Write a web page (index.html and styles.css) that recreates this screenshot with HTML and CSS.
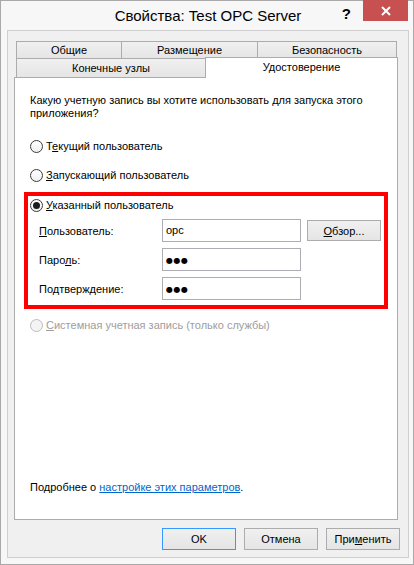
FILE: index.html
```html
<!DOCTYPE html>
<html lang="ru">
<head>
    <meta charset="UTF-8">
    <title>Свойства: Test OPC Server</title>
    <link rel="stylesheet" href="styles.css">
</head>
<body>
    <div class="window">
        <div class="titlebar">
            <div class="title">Свойства: Test OPC Server</div>
            <div class="controls">
                <span class="help">?</span>
                <span class="close">
                    <svg width="10" height="10" viewBox="0 0 10 10"><path d="M1 1 L9 9 M9 1 L1 9" stroke="#fff" stroke-width="2"/></svg>
                </span>
            </div>
        </div>
        <div class="client">
            <div class="tabs">
                <div class="tab-row">
                    <div class="tab t-general">Общие</div>
                    <div class="tab t-place">Размещение</div>
                    <div class="tab t-security">Безопасность</div>
                </div>
                <div class="tab-row front">
                    <div class="tab t-endpoints">Конечные узлы</div>
                    <div class="tab t-identity selected">Удостоверение</div>
                </div>
            </div>
            <div class="panel">
                <p class="question">Какую учетную запись вы хотите использовать для запуска этого<br>приложения?</p>
                <div class="option first"><span class="radio"></span><span>Т<u>е</u>кущий пользователь</span></div>
                <div class="option"><span class="radio"></span><span><u>З</u>апускающий пользователь</span></div>
                <div class="highlight">
                    <div class="option"><span class="radio on"></span><span><u>У</u>казанный пользователь</span></div>
                    <div class="fields">
                        <label><u>П</u>ользователь:</label>
                        <div class="field">opc</div>
                        <button class="btn browse"><u>О</u>бзор...</button>
                        <label>Паро<u>л</u>ь:</label>
                        <div class="field"><span class="dots">●●●</span></div>
                        <span></span>
                        <label>Подтверждение:</label>
                        <div class="field"><span class="dots">●●●</span></div>
                        <span></span>
                    </div>
                </div>
                <div class="option disabled"><span class="radio"></span><span><u>С</u>истемная учетная запись (только службы)</span></div>
                <p class="more">Подробнее о <a href="#">настройке этих параметров</a>.</p>
            </div>
            <div class="actions">
                <button class="btn default">OK</button>
                <button class="btn">Отмена</button>
                <button class="btn">При<u>м</u>енить</button>
            </div>
        </div>
    </div>
</body>
</html>
```

FILE: styles.css
```css
* { box-sizing: border-box; }
body { margin: 0; font-family: "Liberation Sans", Arial, sans-serif; font-size: 11px; color: #000; background: #fff; }
.window { width: 414px; height: 565px; border: 1px solid #a9a9a9; background: #f7f7f7; padding: 0 4px 6px 6px; display: flex; flex-direction: column; }

/* title bar */
.titlebar { height: 29px; display: grid; }
.title, .controls { grid-area: 1 / 1; }
.title { text-align: center; font-size: 15px; line-height: 30px; }
.controls { justify-self: end; display: flex; align-items: flex-start; margin-top: -1px; margin-right: 1px; }
.help { font-weight: bold; font-size: 15px; margin: 5px 12px 0 0; }
.close { width: 45px; height: 21px; background: #c75050; display: flex; align-items: center; justify-content: center; }

/* client area */
.client { flex: 1; border: 1px solid #cfcfcf; background: #f0f0f0; padding: 10px 10px 7px 6px; display: flex; flex-direction: column; }
.tabs { margin-left: 2px; }
.tab-row { display: flex; align-items: flex-end; }
.tab { height: 18px; line-height: 16px; text-align: center; border: 1px solid #acacac; background: linear-gradient(#f0f0f0, #e5e5e5); }
.tab + .tab { margin-left: -1px; }
.t-general { width: 106px; }
.t-place { width: 137px; }
.t-security { width: 140px; }
.front { height: 19px; margin-top: -1px; }
.front .tab { height: 19px; border-bottom: none; line-height: 19px; }
.t-endpoints { width: 190px; }
.front .selected { width: 193px; height: 21px; margin-bottom: -1px; background: #fff; position: relative; z-index: 1; line-height: 18px; }

.panel { flex: 1; background: #fff; border: 1px solid #acacac; padding: 16px 15px 24px 15px; display: flex; flex-direction: column; }
.question { margin: 0; line-height: 13px; }
.option { display: flex; align-items: center; gap: 3px; height: 16px; margin-top: 13px; }
.option.first { margin-top: 18px; }
.radio { width: 13px; height: 13px; border: 1px solid #3c3c3c; border-radius: 50%; background: linear-gradient(#ffffff, #f0f0f0); display: inline-flex; align-items: center; justify-content: center; }
.radio.on::after { content: ""; width: 7px; height: 7px; border-radius: 50%; background: #1b1b1b; }
.disabled { color: #9d9d9d; margin-top: 8px; }
.disabled .radio { border-color: #bcbcbc; background: #f4f4f4; }

.highlight { width: 364px; margin: 9px 0 0 -6px; border: 4px solid #ff0000; padding: 1px 0 5px 2px; }
.highlight .option { margin-top: 0; }
.fields { display: grid; grid-template-columns: 117px 139px 74px; column-gap: 6px; row-gap: 6px; margin: 6px 0 0 9px; align-items: center; }
.field { height: 23px; border: 1px solid #abadb3; background: #fff; padding: 0 3px; line-height: 21px; }
.dots { font-family: "DejaVu Sans", sans-serif; font-size: 8px; letter-spacing: 0.5px; }

.btn { font: inherit; color: #000; height: 22px; border: 1px solid #acacac; background: linear-gradient(#f0f0f0, #e5e5e5); padding: 0; }
.browse { height: 21px; }
.btn.default { border-color: #3399ff; }

.more { margin: auto 0 0 0; line-height: 16px; }
.more a { color: #0066cc; }

.actions { display: flex; justify-content: flex-end; gap: 8px; margin: 8px -2px 0 0; }
.actions .btn { width: 74px; }
```
